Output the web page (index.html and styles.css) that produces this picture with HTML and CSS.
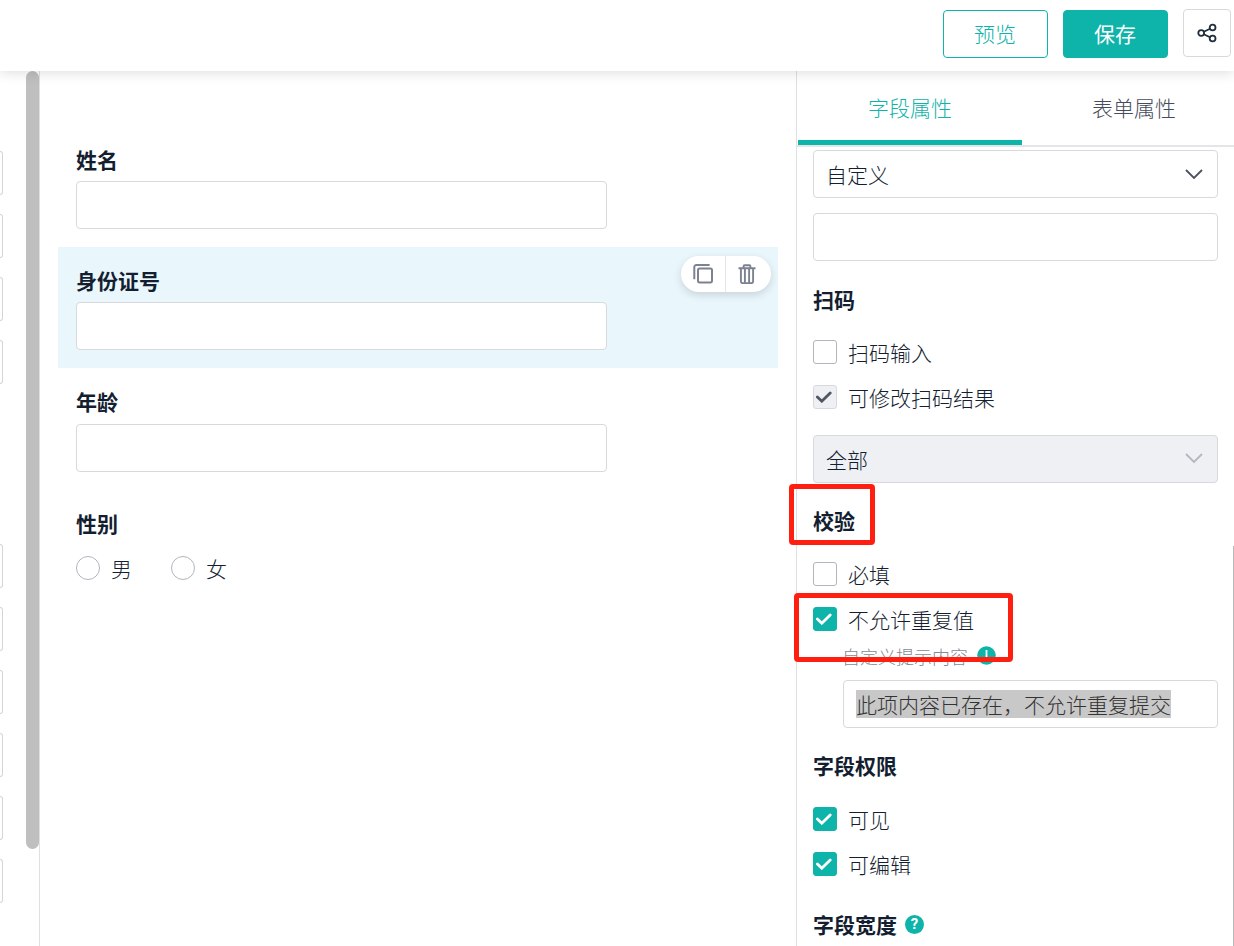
FILE: index.html
```html
<!DOCTYPE html>
<html lang="zh-CN">
<head>
    <meta charset="UTF-8">
    <title>表单设计</title>
    <link rel="stylesheet" href="styles.css">
</head>
<body>
    <header class="header">
        <button class="btn">预览</button>
        <button class="btn btn-primary">保存</button>
        <button class="btn-icon">
            <svg width="20" height="20" viewBox="0 0 20 20" fill="none" stroke="#1f2d3d" stroke-width="1.8">
                <circle cx="4.2" cy="10" r="2.9"/>
                <circle cx="15.6" cy="4.5" r="2.9"/>
                <circle cx="15.6" cy="15.5" r="2.9"/>
                <path d="M6.8 8.7l6.2-3M6.8 11.3l6.2 3"/>
            </svg>
        </button>
    </header>

    <main class="main">
        <aside class="sidebar">
            <div class="widgets">
                <div class="widget-group">
                    <div class="widget"></div>
                    <div class="widget"></div>
                    <div class="widget"></div>
                    <div class="widget"></div>
                </div>
                <div class="widget-group">
                    <div class="widget"></div>
                    <div class="widget"></div>
                    <div class="widget"></div>
                    <div class="widget"></div>
                    <div class="widget"></div>
                    <div class="widget"></div>
                </div>
            </div>
            <div class="scrollbar"></div>
        </aside>

        <section class="canvas">
            <div class="field">
                <div class="field-label">姓名</div>
                <div class="input"></div>
            </div>
            <div class="field active">
                <div class="field-label">身份证号</div>
                <div class="input"></div>
                <div class="tools">
                    <span class="tool">
                        <svg width="20" height="20" viewBox="0 0 20 20" fill="none" stroke="#7d8290" stroke-width="2">
                            <rect x="5" y="4.4" width="14" height="14" rx="1.6"/>
                            <path d="M1.3 15.2V3a2 2 0 0 1 2-2h13.3"/>
                        </svg>
                    </span>
                    <span class="tool">
                        <svg width="18" height="20" viewBox="0 0 18 20" fill="none" stroke="#7d8290" stroke-width="1.9">
                            <path d="M.5 4.2h17M5.6 4V2.2a1 1 0 0 1 1-1h4.8a1 1 0 0 1 1 1V4M2.9 4.2v13a2 2 0 0 0 2 2h8.2a2 2 0 0 0 2-2v-13M6.9 5v13.5M11.1 5v13.5"/>
                        </svg>
                    </span>
                </div>
            </div>
            <div class="field">
                <div class="field-label">年龄</div>
                <div class="input"></div>
            </div>
            <div class="field">
                <div class="field-label">性别</div>
                <div class="radios">
                    <label class="radio"><i class="radio-dot"></i>男</label>
                    <label class="radio"><i class="radio-dot"></i>女</label>
                </div>
            </div>
        </section>

        <aside class="panel">
            <nav class="tabs">
                <div class="tab active">字段属性</div>
                <div class="tab">表单属性</div>
            </nav>
            <div class="props">
                <div class="input select">
                    自定义
                    <svg class="arrow" width="18" height="11" viewBox="0 0 18 11" fill="none" stroke="#4a5160" stroke-width="1.8"><path d="M1 1l8 8 8-8"/></svg>
                </div>
                <div class="input"></div>

                <h3 class="title">扫码</h3>
                <label class="check"><i class="box"></i>扫码输入</label>
                <label class="check"><i class="box disabled"><svg width="16" height="12" viewBox="0 0 16 12"><path d="M1.4 6l4.4 4.2 8.4-8.2"/></svg></i>可修改扫码结果</label>
                <div class="input select disabled">
                    全部
                    <svg class="arrow" width="18" height="11" viewBox="0 0 18 11" fill="none" stroke="#b4b7bf" stroke-width="1.8"><path d="M1 1l8 8 8-8"/></svg>
                </div>

                <h3 class="title title-verify">校验<span class="mark mark-title"></span></h3>
                <label class="check"><i class="box"></i>必填</label>
                <div class="unique">
                    <label class="check"><i class="box checked"><svg width="16" height="12" viewBox="0 0 16 12"><path d="M1.4 6l4.4 4.2 8.4-8.2"/></svg></i>不允许重复值</label>
                    <div class="hint">自定义提示内容
                        <svg width="19" height="19" viewBox="0 0 19 19"><circle cx="9.5" cy="9.5" r="9.3" fill="#0eb3a9"/><path d="M9.5 4v7M9.5 13v2" stroke="#fff" stroke-width="1.8"/></svg>
                    </div>
                    <div class="input message"><span class="selected">此项内容已存在，不允许重复提交</span></div>
                    <span class="mark mark-unique"></span>
                </div>

                <h3 class="title title-auth">字段权限</h3>
                <label class="check"><i class="box checked"><svg width="16" height="12" viewBox="0 0 16 12"><path d="M1.4 6l4.4 4.2 8.4-8.2"/></svg></i>可见</label>
                <label class="check"><i class="box checked"><svg width="16" height="12" viewBox="0 0 16 12"><path d="M1.4 6l4.4 4.2 8.4-8.2"/></svg></i>可编辑</label>

                <h3 class="title title-width">字段宽度<span class="help">?</span></h3>
            </div>
            <div class="panel-scrollbar"></div>
        </aside>
    </main>
</body>
</html>
```

FILE: styles.css
```css
* {
    box-sizing: border-box;
}
body {
    margin: 0;
    height: 946px;
    display: flex;
    flex-direction: column;
    overflow: hidden;
    background: #fff;
    color: #141e31;
    font-family: "Noto Sans CJK SC", sans-serif;
    font-size: 21px;
    font-weight: 300;
}
svg {
    display: block;
    flex: none;
}

/* header */
.header {
    position: relative;
    z-index: 2;
    flex: none;
    display: flex;
    justify-content: flex-end;
    gap: 15px;
    height: 71px;
    padding: 10px 3px 0 0;
    background: #fff;
    box-shadow: 0 2px 12px rgba(0, 0, 0, 0.13);
}
.btn {
    width: 105px;
    height: 48px;
    padding: 0 1px 2px 0;
    border: 1px solid #0eb3a9;
    border-radius: 4px;
    background: #fff;
    color: #0eb3a9;
    font: inherit;
}
.btn-primary {
    background: #0eb3a9;
    color: #fff;
    font-weight: 400;
}
.btn-icon {
    display: flex;
    align-items: center;
    justify-content: center;
    width: 48px;
    height: 48px;
    margin-top: -1px;
    padding: 0;
    border: 1px solid #d7d9dc;
    border-radius: 4px;
    background: #fff;
}

.main {
    flex: 1;
    display: flex;
    min-height: 0;
}

/* left widget list */
.sidebar {
    flex: none;
    display: flex;
    justify-content: space-between;
    width: 40px;
    border-right: 1px solid #dfe0e2;
}
.widgets {
    display: flex;
    flex-direction: column;
    gap: 160px;
    padding-top: 80px;
}
.widget-group {
    display: flex;
    flex-direction: column;
    gap: 19px;
}
.widget {
    width: 3px;
    height: 44px;
    border: 1px solid #d3d5d8;
    border-left: none;
    border-radius: 0 4px 4px 0;
}
.scrollbar {
    width: 13px;
    height: 778px;
    border-radius: 7px;
    background: #bfbfbf;
}

/* form canvas */
.canvas {
    flex: none;
    width: 756px;
    padding: 54.5px 18px 0;
}
.field {
    position: relative;
    height: 121.4px;
    padding: 17px 18px 0;
}
.field.active {
    background: #e9f6fc;
}
.field-label {
    height: 38.3px;
    line-height: 32px;
    font-weight: 700;
}
.input {
    flex: none;
    height: 48px;
    border: 1px solid #d7d9dc;
    border-radius: 4px;
    background: #fff;
}
.field .input {
    width: 531px;
}
.tools {
    position: absolute;
    top: 9px;
    right: 7px;
    display: flex;
    width: 90px;
    height: 36px;
    border-radius: 18px;
    background: #fff;
    box-shadow: 0 3px 8px rgba(0, 0, 0, 0.14);
}
.tool {
    flex: 1;
    display: flex;
    align-items: center;
    justify-content: center;
}
.tool + .tool {
    padding-right: 2px;
    border-left: 1px solid #e4e6ea;
}
.radios {
    display: flex;
    gap: 39px;
    padding-top: 7px;
}
.radio {
    display: flex;
    align-items: center;
    gap: 11px;
    height: 32px;
}
.radio-dot {
    width: 24px;
    height: 24px;
    border: 1px solid #b3b5bd;
    border-radius: 50%;
}

/* properties panel */
.panel {
    position: relative;
    flex: none;
    width: 438px;
    border-left: 1px solid #dfe0e2;
}
.tabs {
    display: flex;
    height: 76px;
    padding-left: 1px;
    border-bottom: 2px solid #e4e5e7;
}
.tab {
    width: 224px;
    height: 74px;
    flex: none;
    line-height: 72px;
    text-align: center;
    color: #464c5b;
}
.tab.active {
    border-bottom: 5px solid #0eb3a9;
    color: #0eb3a9;
}
.props {
    display: flex;
    flex-direction: column;
    padding: 3px 16px 0;
}
.props .input + .input {
    margin-top: 15px;
}
.select {
    display: flex;
    align-items: center;
    justify-content: space-between;
    padding: 0 14px 0 12px;
}
.select.disabled {
    margin-top: 8px;
    padding-bottom: 1px;
    background: #eef0f4;
}
.title {
    position: relative;
    display: flex;
    align-items: center;
    height: 32px;
    margin: 24px 0 20px;
    padding-bottom: 5px;
    font-size: 21px;
    font-weight: 700;
}
.check {
    display: flex;
    align-items: center;
    gap: 11px;
    height: 30px;
    margin-bottom: 15px;
}
.box {
    display: flex;
    align-items: center;
    justify-content: center;
    width: 24px;
    height: 24px;
    border: 1px solid #b3b5bd;
    border-radius: 3px;
}
.box svg {
    margin: 0 2px 1px 0;
}
.box path {
    fill: none;
    stroke: #fff;
    stroke-width: 2.8;
    stroke-linecap: round;
}
.box.checked {
    border-color: #0eb3a9;
    background: #0eb3a9;
}
.box.disabled {
    border-color: #d7d9dc;
    background: #eef0f4;
}
.box.disabled path {
    stroke: #4f5664;
}
.title-verify {
    margin: 23px 0 21px;
}
.title-auth {
    margin: 23px 0 21px;
}
.title-width {
    margin: 16px 0 0;
}
.unique {
    position: relative;
}
.hint {
    display: flex;
    align-items: center;
    gap: 9px;
    height: 24px;
    margin: -5px 0 0 29px;
    font-size: 18px;
    color: #858a95;
}
.hint svg {
    margin-bottom: 1px;
}
.message {
    display: flex;
    align-items: center;
    margin: 12px 0 0 30px;
    padding-left: 12px;
}
.selected {
    height: 28px;
    line-height: 29px;
    background: #c8c8c8;
    color: #333;
}
.help {
    width: 19px;
    height: 19px;
    margin: 1px 0 0 8px;
    border-radius: 50%;
    background: #0eb3a9;
    color: #fff;
    font-family: Roboto, sans-serif;
    font-size: 15px;
    line-height: 19px;
    text-align: center;
}

/* red highlight frames */
.mark {
    position: absolute;
    border: 5px solid #ff1f11;
    border-radius: 4px;
}
.mark-title {
    top: -22px;
    left: -24px;
    width: 86px;
    height: 61px;
}
.mark-unique {
    top: -11px;
    left: -19px;
    width: 219px;
    height: 69px;
}
.panel-scrollbar {
    position: absolute;
    top: 475px;
    right: 0;
    bottom: 0;
    width: 1px;
    background: #b8b8b8;
}
```
